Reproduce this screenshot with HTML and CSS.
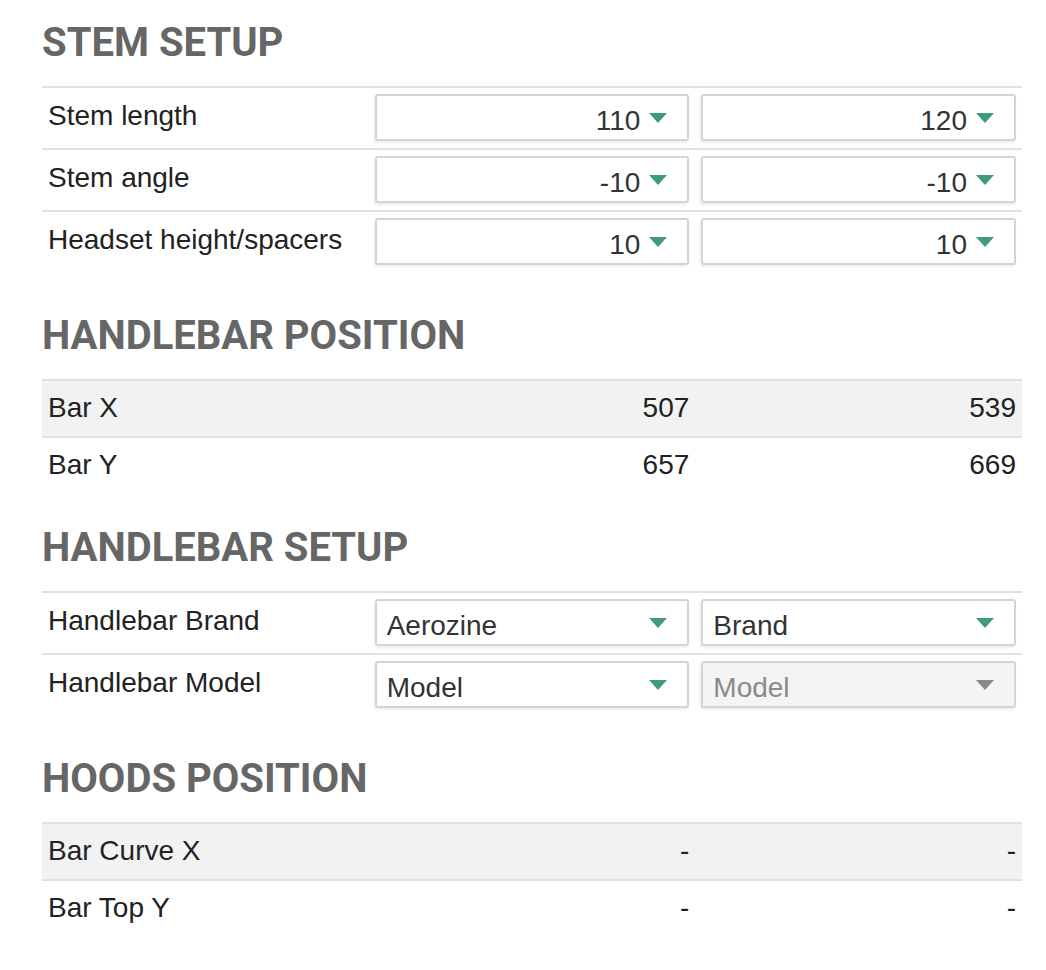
FILE: index.html
```html
<!DOCTYPE html>
<html>
<head>
<meta charset="utf-8">
<link rel="stylesheet" href="styles.css">
</head>
<body>
<div class="page">
  <section class="section">
    <h2 class="title">STEM SETUP</h2>
    <div class="table">
      <div class="row sel-row">
        <div class="label">Stem length</div>
        <div class="cell"><div class="select num"><span>110</span><svg class="caret" viewBox="0 0 18 10"><polygon points="0,0 18,0 9,10"/></svg></div></div>
        <div class="cell"><div class="select num"><span>120</span><svg class="caret" viewBox="0 0 18 10"><polygon points="0,0 18,0 9,10"/></svg></div></div>
      </div>
      <div class="row sel-row">
        <div class="label">Stem angle</div>
        <div class="cell"><div class="select num"><span>-10</span><svg class="caret" viewBox="0 0 18 10"><polygon points="0,0 18,0 9,10"/></svg></div></div>
        <div class="cell"><div class="select num"><span>-10</span><svg class="caret" viewBox="0 0 18 10"><polygon points="0,0 18,0 9,10"/></svg></div></div>
      </div>
      <div class="row sel-row">
        <div class="label">Headset height/spacers</div>
        <div class="cell"><div class="select num"><span>10</span><svg class="caret" viewBox="0 0 18 10"><polygon points="0,0 18,0 9,10"/></svg></div></div>
        <div class="cell"><div class="select num"><span>10</span><svg class="caret" viewBox="0 0 18 10"><polygon points="0,0 18,0 9,10"/></svg></div></div>
      </div>
    </div>
  </section>

  <section class="section after-sel">
    <h2 class="title">HANDLEBAR POSITION</h2>
    <div class="table striped">
      <div class="row val-row">
        <div class="vlabel">Bar X</div>
        <div class="value">507</div>
        <div class="value">539</div>
      </div>
      <div class="row val-row">
        <div class="vlabel">Bar Y</div>
        <div class="value">657</div>
        <div class="value">669</div>
      </div>
    </div>
  </section>

  <section class="section after-val">
    <h2 class="title">HANDLEBAR SETUP</h2>
    <div class="table">
      <div class="row sel-row">
        <div class="label">Handlebar Brand</div>
        <div class="cell"><div class="select text"><span>Aerozine</span><svg class="caret" viewBox="0 0 18 10"><polygon points="0,0 18,0 9,10"/></svg></div></div>
        <div class="cell"><div class="select text"><span>Brand</span><svg class="caret" viewBox="0 0 18 10"><polygon points="0,0 18,0 9,10"/></svg></div></div>
      </div>
      <div class="row sel-row">
        <div class="label">Handlebar Model</div>
        <div class="cell"><div class="select text"><span>Model</span><svg class="caret" viewBox="0 0 18 10"><polygon points="0,0 18,0 9,10"/></svg></div></div>
        <div class="cell"><div class="select text disabled"><span>Model</span><svg class="caret" viewBox="0 0 18 10"><polygon points="0,0 18,0 9,10"/></svg></div></div>
      </div>
    </div>
  </section>

  <section class="section after-sel">
    <h2 class="title">HOODS POSITION</h2>
    <div class="table striped">
      <div class="row val-row">
        <div class="vlabel">Bar Curve X</div>
        <div class="value">-</div>
        <div class="value">-</div>
      </div>
      <div class="row val-row">
        <div class="vlabel">Bar Top Y</div>
        <div class="value">-</div>
        <div class="value">-</div>
      </div>
    </div>
  </section>
</div>
</body>
</html>
```

FILE: styles.css
```css
html, body {
  margin: 0;
  padding: 0;
  background: #ffffff;
}

body {
  font-family: "Liberation Sans", Arial, sans-serif;
  color: #222222;
}

.page {
  width: 980px;
  margin-left: 42px;
  padding-top: 19px;
}

.title {
  margin: 0 0 19px 0;
  font-family: Roboto, "Liberation Sans", sans-serif;
  font-weight: 700;
  font-size: 40px;
  line-height: 48px;
  color: #666666;
}

.section.after-sel {
  margin-top: 40px;
}

.section.after-val {
  margin-top: 31px;
}

.row {
  display: grid;
  grid-template-columns: 1fr 1fr 1fr;
  border-top: 2px solid #dee2e6;
  font-size: 28px;
  line-height: 32px;
}

.sel-row {
  padding: 6px 0 7px 0;
}

.label {
  padding: 6px 6px 0 6px;
}

.cell {
  padding: 0 6px;
}

.select {
  height: 47px;
  box-sizing: border-box;
  border: 2px solid #d4d4d4;
  border-radius: 3px;
  background: #ffffff;
  box-shadow: -1px 2px 3px rgba(0, 0, 0, 0.07);
  display: flex;
  align-items: flex-start;
  padding: 9px 20px 0 10px;
  color: #333333;
}

.select.num {
  justify-content: flex-end;
}

.select.text {
  justify-content: space-between;
}

.select .caret {
  width: 18px;
  height: 10px;
  margin-top: 8px;
  margin-left: 9px;
  fill: #3f9a7f;
  flex: none;
}

.select.disabled {
  background: #f4f4f4;
  color: #8a8a8a;
}

.select.disabled .caret {
  fill: #8a8a8a;
}

.striped .row:nth-child(odd) {
  background: #f2f2f2;
}

.val-row {
  padding: 11px 0 12px 0;
}

.vlabel {
  padding: 0 6px;
}

.value {
  padding: 0 6px;
  text-align: right;
}
```
